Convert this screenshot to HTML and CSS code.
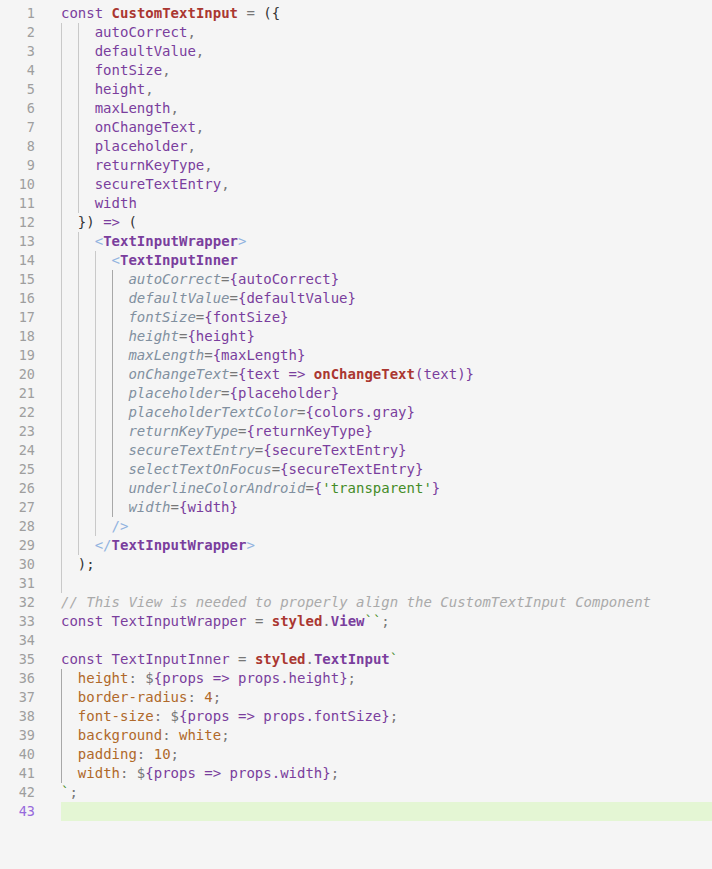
FILE: index.html
```html
<!DOCTYPE html>
<html>
<head>
<meta charset="utf-8">
<link rel="stylesheet" href="styles.css">
</head>
<body>
<div class="editor">
<div class="line"><span class="ln">1</span><span class="code"><span class="k">const</span> <span class="fn">CustomTextInput</span> <span class="op">=</span> <span class="pu">({</span></span></div>
<div class="line"><span class="ln">2</span><span class="code"><span class="ig"></span><span class="ig"></span><span class="v">autoCorrect</span><span class="op">,</span></span></div>
<div class="line"><span class="ln">3</span><span class="code"><span class="ig"></span><span class="ig"></span><span class="v">defaultValue</span><span class="op">,</span></span></div>
<div class="line"><span class="ln">4</span><span class="code"><span class="ig"></span><span class="ig"></span><span class="v">fontSize</span><span class="op">,</span></span></div>
<div class="line"><span class="ln">5</span><span class="code"><span class="ig"></span><span class="ig"></span><span class="v">height</span><span class="op">,</span></span></div>
<div class="line"><span class="ln">6</span><span class="code"><span class="ig"></span><span class="ig"></span><span class="v">maxLength</span><span class="op">,</span></span></div>
<div class="line"><span class="ln">7</span><span class="code"><span class="ig"></span><span class="ig"></span><span class="v">onChangeText</span><span class="op">,</span></span></div>
<div class="line"><span class="ln">8</span><span class="code"><span class="ig"></span><span class="ig"></span><span class="v">placeholder</span><span class="op">,</span></span></div>
<div class="line"><span class="ln">9</span><span class="code"><span class="ig"></span><span class="ig"></span><span class="v">returnKeyType</span><span class="op">,</span></span></div>
<div class="line"><span class="ln">10</span><span class="code"><span class="ig"></span><span class="ig"></span><span class="v">secureTextEntry</span><span class="op">,</span></span></div>
<div class="line"><span class="ln">11</span><span class="code"><span class="ig"></span><span class="ig"></span><span class="v">width</span></span></div>
<div class="line"><span class="ln">12</span><span class="code"><span class="ig"></span><span class="pu">})</span> <span class="v">=&gt;</span> <span class="pu">(</span></span></div>
<div class="line"><span class="ln">13</span><span class="code"><span class="ig"></span><span class="ig"></span><span class="tb">&lt;</span><span class="tag">TextInputWrapper</span><span class="tb">&gt;</span></span></div>
<div class="line"><span class="ln">14</span><span class="code"><span class="ig"></span><span class="ig"></span><span class="ig"></span><span class="tb">&lt;</span><span class="tag">TextInputInner</span></span></div>
<div class="line"><span class="ln">15</span><span class="code"><span class="ig"></span><span class="ig"></span><span class="ig"></span><span class="ig act"></span><span class="at">autoCorrect</span><span class="op">=</span><span class="v">{autoCorrect}</span></span></div>
<div class="line"><span class="ln">16</span><span class="code"><span class="ig"></span><span class="ig"></span><span class="ig"></span><span class="ig act"></span><span class="at">defaultValue</span><span class="op">=</span><span class="v">{defaultValue}</span></span></div>
<div class="line"><span class="ln">17</span><span class="code"><span class="ig"></span><span class="ig"></span><span class="ig"></span><span class="ig act"></span><span class="at">fontSize</span><span class="op">=</span><span class="v">{fontSize}</span></span></div>
<div class="line"><span class="ln">18</span><span class="code"><span class="ig"></span><span class="ig"></span><span class="ig"></span><span class="ig act"></span><span class="at">height</span><span class="op">=</span><span class="v">{height}</span></span></div>
<div class="line"><span class="ln">19</span><span class="code"><span class="ig"></span><span class="ig"></span><span class="ig"></span><span class="ig act"></span><span class="at">maxLength</span><span class="op">=</span><span class="v">{maxLength}</span></span></div>
<div class="line"><span class="ln">20</span><span class="code"><span class="ig"></span><span class="ig"></span><span class="ig"></span><span class="ig act"></span><span class="at">onChangeText</span><span class="op">=</span><span class="v">{text =&gt; </span><span class="fn">onChangeText</span><span class="v">(text)}</span></span></div>
<div class="line"><span class="ln">21</span><span class="code"><span class="ig"></span><span class="ig"></span><span class="ig"></span><span class="ig act"></span><span class="at">placeholder</span><span class="op">=</span><span class="v">{placeholder}</span></span></div>
<div class="line"><span class="ln">22</span><span class="code"><span class="ig"></span><span class="ig"></span><span class="ig"></span><span class="ig act"></span><span class="at">placeholderTextColor</span><span class="op">=</span><span class="v">{colors.gray}</span></span></div>
<div class="line"><span class="ln">23</span><span class="code"><span class="ig"></span><span class="ig"></span><span class="ig"></span><span class="ig act"></span><span class="at">returnKeyType</span><span class="op">=</span><span class="v">{returnKeyType}</span></span></div>
<div class="line"><span class="ln">24</span><span class="code"><span class="ig"></span><span class="ig"></span><span class="ig"></span><span class="ig act"></span><span class="at">secureTextEntry</span><span class="op">=</span><span class="v">{secureTextEntry}</span></span></div>
<div class="line"><span class="ln">25</span><span class="code"><span class="ig"></span><span class="ig"></span><span class="ig"></span><span class="ig act"></span><span class="at">selectTextOnFocus</span><span class="op">=</span><span class="v">{secureTextEntry}</span></span></div>
<div class="line"><span class="ln">26</span><span class="code"><span class="ig"></span><span class="ig"></span><span class="ig"></span><span class="ig act"></span><span class="at">underlineColorAndroid</span><span class="op">=</span><span class="v">{</span><span class="s">'transparent'</span><span class="v">}</span></span></div>
<div class="line"><span class="ln">27</span><span class="code"><span class="ig"></span><span class="ig"></span><span class="ig"></span><span class="ig act"></span><span class="at">width</span><span class="op">=</span><span class="v">{width}</span></span></div>
<div class="line"><span class="ln">28</span><span class="code"><span class="ig"></span><span class="ig"></span><span class="ig"></span><span class="tb">/&gt;</span></span></div>
<div class="line"><span class="ln">29</span><span class="code"><span class="ig"></span><span class="ig"></span><span class="tb">&lt;/</span><span class="tag">TextInputWrapper</span><span class="tb">&gt;</span></span></div>
<div class="line"><span class="ln">30</span><span class="code"><span class="ig"></span><span class="pu">);</span></span></div>
<div class="line"><span class="ln">31</span><span class="code"><span class="ig"></span></span></div>
<div class="line"><span class="ln">32</span><span class="code"><span class="c">// This View is needed to properly align the CustomTextInput Component</span></span></div>
<div class="line"><span class="ln">33</span><span class="code"><span class="k">const</span> <span class="v">TextInputWrapper</span> <span class="op">=</span> <span class="fn">styled</span><span class="op">.</span><span class="cls">View</span><span class="s">``</span><span class="op">;</span></span></div>
<div class="line"><span class="ln">34</span><span class="code"></span></div>
<div class="line"><span class="ln">35</span><span class="code"><span class="k">const</span> <span class="v">TextInputInner</span> <span class="op">=</span> <span class="fn">styled</span><span class="op">.</span><span class="cls">TextInput</span><span class="s">`</span></span></div>
<div class="line"><span class="ln">36</span><span class="code"><span class="ig act"></span><span class="pr">height</span><span class="op">: </span><span class="op">$</span><span class="v">{props =&gt; props.height}</span><span class="op">;</span></span></div>
<div class="line"><span class="ln">37</span><span class="code"><span class="ig act"></span><span class="pr">border-radius</span><span class="op">: </span><span class="pr">4</span><span class="op">;</span></span></div>
<div class="line"><span class="ln">38</span><span class="code"><span class="ig act"></span><span class="pr">font-size</span><span class="op">: </span><span class="op">$</span><span class="v">{props =&gt; props.fontSize}</span><span class="op">;</span></span></div>
<div class="line"><span class="ln">39</span><span class="code"><span class="ig act"></span><span class="pr">background</span><span class="op">: </span><span class="pr">white</span><span class="op">;</span></span></div>
<div class="line"><span class="ln">40</span><span class="code"><span class="ig act"></span><span class="pr">padding</span><span class="op">: </span><span class="pr">10</span><span class="op">;</span></span></div>
<div class="line"><span class="ln">41</span><span class="code"><span class="ig act"></span><span class="pr">width</span><span class="op">: </span><span class="op">$</span><span class="v">{props =&gt; props.width}</span><span class="op">;</span></span></div>
<div class="line"><span class="ln">42</span><span class="code"><span class="s">`</span><span class="op">;</span></span></div>
<div class="line current"><span class="ln">43</span><span class="code"></span></div>
</div>
</body>
</html>
```

FILE: styles.css
```css
html, body {
  margin: 0;
  padding: 0;
  background: #f5f5f5;
}
.editor {
  padding-top: 4px;
  font-family: "DejaVu Sans Mono", monospace;
  font-size: 14px;
}
.line {
  display: flex;
  height: 19px;
  line-height: 19px;
}
.ln {
  width: 35px;
  flex: none;
  text-align: right;
  color: #9e9e9e;
  font-size: 13.5px;
}
.code {
  margin-left: 26px;
  flex: 1;
  white-space: pre;
  color: #333333;
}
.current .code {
  background: #e4f6d4;
}
.current .ln {
  color: #9769dc;
}
.ig {
  display: inline-block;
  box-sizing: border-box;
  width: 2ch;
  height: 19px;
  vertical-align: top;
  border-left: 1px solid #c9c9c9;
}
.ig.act {
  border-left-color: #a8a8a8;
}
.k { color: #7a3e9d; }
.v { color: #7a3e9d; }
.fn { color: #aa3731; font-weight: bold; }
.cls { color: #7a3e9d; font-weight: bold; }
.tag { color: #7a3e9d; font-weight: bold; }
.tb { color: #91b3e0; }
.at { color: #8190a0; font-style: italic; }
.op { color: #777777; }
.pu { color: #333333; }
.s { color: #448c27; }
.c { color: #aaaaaa; font-style: italic; }
.pr { color: #b0692a; }
```
